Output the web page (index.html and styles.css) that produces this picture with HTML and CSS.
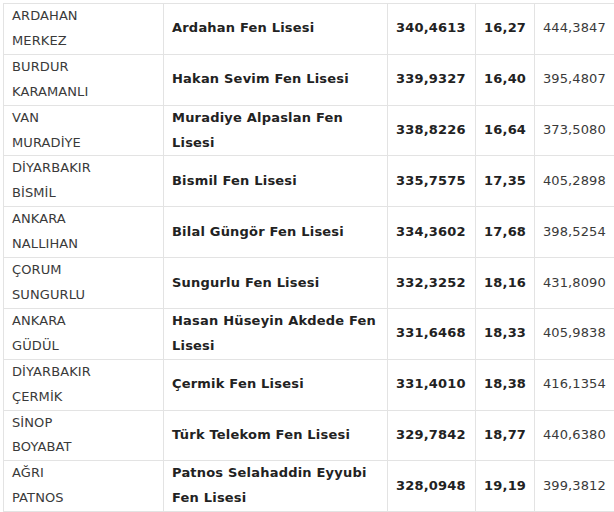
FILE: index.html
```html
<!DOCTYPE html>
<html lang="tr">
<head>
<meta charset="utf-8">
<title>Fen Liseleri</title>
<link rel="stylesheet" href="styles.css">
</head>
<body>
<table class="results">
  <colgroup>
    <col class="c-city">
    <col class="c-school">
    <col class="c-score">
    <col class="c-pct">
    <col class="c-max">
  </colgroup>
  <tbody>
    <tr><td>ARDAHAN<br>MERKEZ</td><td class="b">Ardahan Fen Lisesi</td><td class="b">340,4613</td><td class="b">16,27</td><td>444,3847</td></tr>
    <tr><td>BURDUR<br>KARAMANLI</td><td class="b">Hakan Sevim Fen Lisesi</td><td class="b">339,9327</td><td class="b">16,40</td><td>395,4807</td></tr>
    <tr><td>VAN<br>MURADİYE</td><td class="b">Muradiye Alpaslan Fen Lisesi</td><td class="b">338,8226</td><td class="b">16,64</td><td>373,5080</td></tr>
    <tr><td>DİYARBAKIR<br>BİSMİL</td><td class="b">Bismil Fen Lisesi</td><td class="b">335,7575</td><td class="b">17,35</td><td>405,2898</td></tr>
    <tr><td>ANKARA<br>NALLIHAN</td><td class="b">Bilal Güngör Fen Lisesi</td><td class="b">334,3602</td><td class="b">17,68</td><td>398,5254</td></tr>
    <tr><td>ÇORUM<br>SUNGURLU</td><td class="b">Sungurlu Fen Lisesi</td><td class="b">332,3252</td><td class="b">18,16</td><td>431,8090</td></tr>
    <tr><td>ANKARA<br>GÜDÜL</td><td class="b">Hasan Hüseyin Akdede Fen Lisesi</td><td class="b">331,6468</td><td class="b">18,33</td><td>405,9838</td></tr>
    <tr><td>DİYARBAKIR<br>ÇERMİK</td><td class="b">Çermik Fen Lisesi</td><td class="b">331,4010</td><td class="b">18,38</td><td>416,1354</td></tr>
    <tr><td>SİNOP<br>BOYABAT</td><td class="b">Türk Telekom Fen Lisesi</td><td class="b">329,7842</td><td class="b">18,77</td><td>440,6380</td></tr>
    <tr><td>AĞRI<br>PATNOS</td><td class="b">Patnos Selahaddin Eyyubi Fen Lisesi</td><td class="b">328,0948</td><td class="b">19,19</td><td>399,3812</td></tr>
  </tbody>
</table>
</body>
</html>
```

FILE: styles.css
```css
html, body {
  margin: 0;
  background: #fff;
  overflow: hidden;
}
body {
  padding: 3px 0 0 3px;
  font-family: "DejaVu Sans", Verdana, sans-serif;
  font-size: 13px;
  color: #3a3a3a;
}
.results {
  border-collapse: collapse;
  table-layout: fixed;
  width: 631px;
}
.c-city { width: 160px; }
.c-school { width: 224px; }
.c-score { width: 88px; }
.c-pct { width: 59px; }
.c-max { width: 100px; }
.results td {
  border: 1px solid #e3e3e3;
  padding: 0 8px;
  line-height: 24.9px;
  height: 49.8px;
  vertical-align: middle;
  letter-spacing: 0.1px;
}
.results td.b {
  font-weight: bold;
  color: #222;
  letter-spacing: 0.2px;
}
```
